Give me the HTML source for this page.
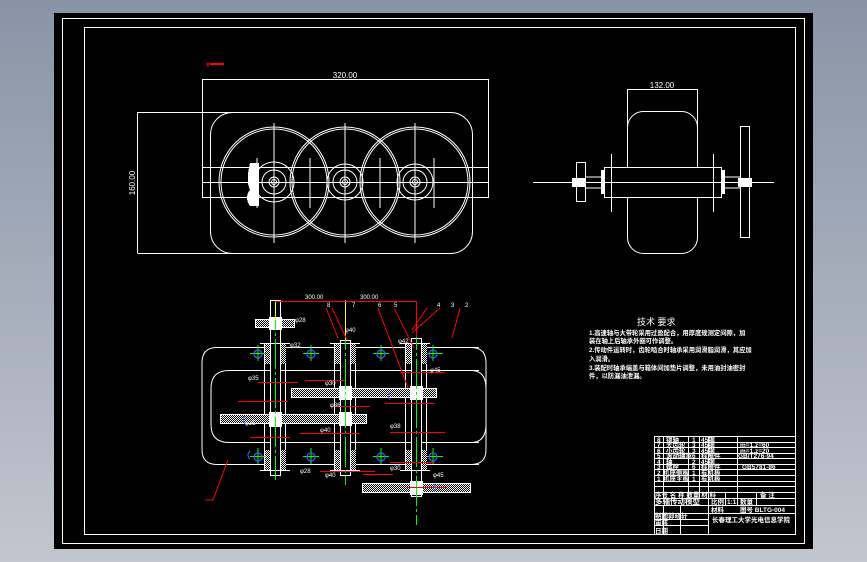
<!DOCTYPE html>
<html><head><meta charset="utf-8"><style>
html,body{margin:0;padding:0;width:867px;height:562px;overflow:hidden;background:linear-gradient(#8894a6,#c2c6ce);}
svg{position:absolute;left:0;top:0}
text{font-family:"Liberation Sans","Noto Sans CJK SC",sans-serif;fill:#fff}
</style></head><body>
<svg width="867" height="562" viewBox="0 0 867 562" shape-rendering="crispEdges">
<rect x="54" y="13" width="759" height="536" fill="#000"/>
<g fill="none" stroke="#fff" stroke-width="1">
<rect x="62.5" y="18.5" width="742" height="525"/>
<rect x="84.5" y="27.5" width="711" height="507"/>
</g>
<rect x="210" y="63" width="14" height="2" fill="#f00"/><path d="M206 64h5M208 62v5" stroke="#f00"/>
<!-- TOP VIEW -->
<g fill="none" stroke="#fff" stroke-width="1" shape-rendering="auto">
<path d="M202.5 79.5H488.5M202.5 79v118M488.5 79v118"/>
<path d="M137.5 112.5H448M137.5 112v141M137.5 253.5H233"/>
<rect x="210.5" y="112.5" width="262" height="141" rx="22"/>
<rect x="202.5" y="167.5" width="286" height="30"/>
<path d="M202 182.5H488"/>
<circle cx="274" cy="182" r="55"/><circle cx="274" cy="182" r="53"/>
<circle cx="345" cy="182" r="55"/><circle cx="345" cy="182" r="53"/>
<circle cx="415" cy="182" r="55"/><circle cx="415" cy="182" r="53"/>
<circle cx="274" cy="182" r="20"/><circle cx="274" cy="182" r="12"/><circle cx="274" cy="182" r="5"/><circle cx="274" cy="182" r="2.5"/>
<circle cx="345" cy="182" r="18"/><circle cx="345" cy="182" r="12"/><circle cx="345" cy="182" r="5"/><circle cx="345" cy="182" r="2.5"/>
<circle cx="415" cy="182" r="18"/><circle cx="415" cy="182" r="12"/><circle cx="415" cy="182" r="5"/><circle cx="415" cy="182" r="2.5"/>
<path d="M274 123v120M345 123v120M415 123v120M257 158v50M310 158v50M380 158v50M434 158v50"/>
</g>
<path d="M250 163h9v43h-9c-4-5-4-12 0-16c-3-6-3-16 0-27z" fill="#fff"/>
<text x="345" y="78" font-size="8" text-anchor="middle">320.00</text>
<text x="0" y="0" font-size="8" text-anchor="middle" transform="translate(135,183) rotate(-90)">160.00</text>
<!-- SIDE VIEW -->
<g fill="none" stroke="#fff" stroke-width="1" shape-rendering="auto">
<path d="M627.5 89.5H697.5M627.5 89v80M697.5 89v80"/>
<rect x="627.5" y="111.5" width="70" height="142" rx="16"/>
<rect x="604.5" y="167.5" width="117" height="30" fill="#000"/>
<path d="M533 182.5H774M611.5 154v58M713.5 154v58"/>
<rect x="576.5" y="162.5" width="9" height="39" fill="#000"/>
<rect x="740.5" y="126.5" width="9" height="111" fill="#000"/>
<path d="M585 177h18M585 188h18M722 177h18M722 188h18"/>
</g>
<rect x="572" y="178" width="14" height="9" fill="#fff"/><rect x="738" y="178" width="14" height="9" fill="#fff"/>
<rect x="601" y="170" width="4" height="24" fill="#fff"/><rect x="721" y="170" width="4" height="24" fill="#fff"/>
<text x="662" y="88" font-size="8" text-anchor="middle">132.00</text>
<!-- BOTTOM VIEW -->
<g fill="none" stroke="#fff" stroke-width="1" shape-rendering="auto">
<path d="M479 347.5H217q-15 0-15 15v87q0 15 15 15H479"/>
<path d="M479 370.5H229q-18 0-18 18v36q0 18 18 18H479"/>
<path d="M468 347.5h3q15 0 15 15v87q0 15-15 15h-3M468 370.5h3q15 0 15 18v36q0 18-15 18h-3"/>
</g>
<defs><pattern id="h" width="2" height="2" patternUnits="userSpaceOnUse"><rect width="2" height="2" fill="#000"/><rect width="1" height="1" fill="#fff"/><rect x="1" y="1" width="1" height="1" fill="#fff"/></pattern></defs>
<!-- shafts -->
<g fill="#000" stroke="#fff" stroke-width="1">
<rect x="270.5" y="300.5" width="10" height="175"/>
<rect x="340.5" y="340.5" width="10" height="135"/>
<rect x="411.5" y="338.5" width="10" height="158"/>
</g>
<g stroke="#fff" stroke-width="1" fill="none">
<path d="M264.5 343v127M285.5 343v127M334.5 343v127M355.5 343v127M405.5 343v127M426.5 343v127"/>
<path d="M260 343.5h30M330 343.5h30M400 343.5h30M260 470.5h30M330 470.5h30M400 470.5h30"/>
</g>
<rect x="265" y="344" width="5" height="20" fill="url(#h)"/><rect x="281" y="344" width="5" height="20" fill="url(#h)"/>
<rect x="335" y="344" width="5" height="20" fill="url(#h)"/><rect x="351" y="344" width="5" height="20" fill="url(#h)"/>
<rect x="406" y="344" width="5" height="20" fill="url(#h)"/><rect x="422" y="344" width="5" height="20" fill="url(#h)"/>
<rect x="265" y="450" width="5" height="20" fill="url(#h)"/><rect x="281" y="450" width="5" height="20" fill="url(#h)"/>
<rect x="335" y="450" width="5" height="20" fill="url(#h)"/><rect x="351" y="450" width="5" height="20" fill="url(#h)"/>
<rect x="406" y="450" width="5" height="20" fill="url(#h)"/><rect x="422" y="450" width="5" height="20" fill="url(#h)"/>
<g stroke="#fff" stroke-width="1">
<rect x="291.5" y="388.5" width="145" height="9" fill="url(#h)"/>
<rect x="220.5" y="414.5" width="146" height="9" fill="url(#h)"/>
<rect x="362.5" y="483.5" width="108" height="9" fill="url(#h)"/>
<rect x="255.5" y="319.5" width="39" height="8" fill="url(#h)"/>
<rect x="269.5" y="412.5" width="12" height="14" fill="#fff"/>
<rect x="339.5" y="386.5" width="12" height="13" fill="#fff"/>
<rect x="339.5" y="412.5" width="12" height="13" fill="#fff"/>
<rect x="410.5" y="386.5" width="12" height="13" fill="#fff"/>
<rect x="410.5" y="481.5" width="12" height="13" fill="#fff"/>
<rect x="269.5" y="317.5" width="12" height="12" fill="#fff"/>
</g>
<g stroke="#0f0" stroke-width="1"><path d="M250 353.5h16M258 345v16M303 353.5h16M311 345v16M373 353.5h16M381 345v16M427 353.5h16M433 345v16M250 456.5h16M258 448v16M303 456.5h16M311 448v16M373 456.5h16M381 448v16M427 456.5h16M433 448v16"/>
<path d="M275.5 300v180M345.5 320v165M416.5 320v205" stroke-dasharray="30 3 3 3"/></g>
<g fill="none" stroke="#36f" stroke-width="1.2" shape-rendering="auto">
<circle cx="258" cy="354" r="4"/><circle cx="311" cy="354" r="4"/><circle cx="381" cy="354" r="4"/><circle cx="433" cy="354" r="4"/>
<circle cx="258" cy="457" r="4"/><circle cx="311" cy="457" r="4"/><circle cx="381" cy="457" r="4"/><circle cx="433" cy="457" r="4"/>
</g>
<path d="M275.5 300v20M345.5 300v40" stroke="#ff0"/>
<g stroke="#f00" stroke-width="1" fill="none">
<path d="M275 301.5H416M416.5 301v36"/>
<path d="M326 308l12 30M332 308l15 32M378 308l30 80M394 308l20 40M427 308l-15 22M440 308l-28 25M460 308l-8 30M228 460l-15 40h-8"/>
<path d="M258 382.5h40M305 380.5h40M238 401.5h50M400 372.5h45M330 406.5h40M300 433.5h60M320 471.5h55M363 474.5h30M385 403.5h50M390 432.5h55M390 462.5h45M406 487.5h40M250 437.5h40"/>
</g>
<g fill="#f00" font-family="Liberation Sans" font-size="6">
<text x="305" y="299">300.00</text><text x="360" y="299">300.00</text>
<text x="295" y="322">φ28</text><text x="290" y="347">φ32</text><text x="325" y="385">φ30</text><text x="248" y="380">φ35</text>
<text x="430" y="372">φ45</text><text x="398" y="343">φ42</text><text x="345" y="332">φ40</text><text x="330" y="407">φ36</text>
<text x="245" y="425">φ35</text><text x="320" y="432">φ40</text><text x="390" y="428">φ38</text><text x="300" y="473">φ28</text>
<text x="325" y="477">φ40</text><text x="390" y="470">φ30</text><text x="433" y="477">φ45</text>
<text x="327" y="307">8</text><text x="352" y="307">7</text><text x="378" y="307">6</text><text x="394" y="307">5</text><text x="437" y="307">4</text><text x="451" y="307">3</text><text x="465" y="307">2</text>
</g>
<path d="M250 451q-4 4 0 8M390 392q-3 4 0 8M245 416q-3 4 0 8M434 484q3 4 0 8" stroke="#36f" fill="none"/>
<text x="637" y="325" font-size="9">技术 要求</text>
<g font-size="6.3" font-weight="bold">
<text x="589" y="335">1.高速轴与大带轮采用过盈配合，用厚度规测定间隙，加</text>
<text x="589" y="343">装在轴上后轴承外圈可作调整。</text>
<text x="589" y="352">2.传动件运转时，齿轮啮合时轴承采用润滑脂润滑，其应加</text>
<text x="589" y="361">入润滑。</text>
<text x="589" y="370">3.装配时轴承端盖与箱体间加垫片调整，未用油封油密封</text>
<text x="589" y="378">件，以防漏油泄漏。</text>
</g>
<g stroke="#fff" stroke-width="1" fill="none">
<rect x="654.5" y="436.5" width="141" height="98"/>
<path d="M654 442.5h142M654 447.5h142M654 453.5h142M654 458.5h142M654 464.5h142M654 469.5h142M654 475.5h142M654 481.5h142M654 486.5h142M654 492.5h142M654 498.5h142M654 505.5h142M654 513.5h142M654 519.5h54M654 525.5h54"/>
<path d="M663.5 436v62M688.5 436v62M699.5 436v62M708.5 436v99M725.5 492v14M737.5 436v70M756.5 492v14"/>
<path d="M663.5 505v30M680.5 505v30"/>
</g>
<g font-size="6.5" font-weight="bold">
<text x="657" y="442">8</text><text x="666" y="442">锁轴</text><text x="692" y="442">1</text><text x="701" y="442">45钢</text>
<text x="657" y="447">7</text><text x="666" y="447">大齿轮</text><text x="692" y="447">3</text><text x="701" y="447">45钢</text><text x="740" y="447">m=1,z=60</text>
<text x="657" y="453">6</text><text x="666" y="453">小齿轮</text><text x="692" y="453">3</text><text x="701" y="453">45钢</text><text x="740" y="453">m=1,z=20</text>
<text x="657" y="458">5</text><text x="666" y="458">滚动轴承</text><text x="692" y="458">6</text><text x="701" y="458">标准件</text><text x="738" y="458">GB/T276-94</text>
<text x="657" y="464">4</text><text x="666" y="464">轴</text><text x="692" y="464">2</text><text x="701" y="464">45钢</text>
<text x="657" y="469">3</text><text x="666" y="469">螺栓</text><text x="692" y="469">6</text><text x="701" y="469">标准件</text><text x="742" y="469">GB5781-86</text>
<text x="657" y="475">2</text><text x="663" y="475">机座侧板</text><text x="692" y="475">1</text><text x="701" y="475">有机板</text>
<text x="657" y="481">1</text><text x="663" y="481">机座主板</text><text x="692" y="481">1</text><text x="701" y="481">有机板</text>
<text x="655" y="497">序号 名 称 数量 材 料</text><text x="760" y="497">备 注</text>
<text x="655" y="504" font-size="7.5">多轴传动模型</text><text x="711" y="504">比例</text><text x="727" y="504">1:1</text><text x="740" y="504">数量</text>
<text x="711" y="512">材料</text><text x="740" y="512">图号 BLTG-004</text>
<text x="655" y="518">制图</text><text x="668" y="518">郭晓轩</text><text x="712" y="522">长春理工大学光电信息学院</text>
<text x="655" y="525">审核</text><text x="655" y="533">日期</text>
</g>
</svg>
</body></html>
